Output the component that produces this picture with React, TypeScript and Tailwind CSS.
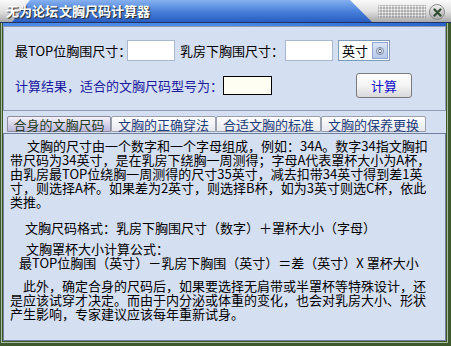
const font = "font-['SimSun','Noto_Sans_CJK_SC',sans-serif]";

const tabs = ["合身的文胸尺码", "文胸的正确穿法", "合适文胸的标准", "文胸的保养更换"];

function TitleBar() {
  return (
    <div className="relative h-[22px] bg-gradient-to-b from-[#fafafa] via-[#e2e2e2] to-[#a9a9a9]">
      <div className="absolute inset-0 bg-gradient-to-b from-[#86b0ee] via-[#4a82dc] to-[#2a5cc0] [clip-path:polygon(30px_0,350px_0,372px_22px,12px_22px)]" />
      <div className="absolute left-[6px] top-[2px] flex whitespace-nowrap text-[13px] leading-[18px] font-bold text-white [text-shadow:1px_1px_1px_#2a2a2a]">
        <span>无为论坛</span>
        <span className="ml-[1px]">文胸尺码计算器</span>
      </div>
      <div className="absolute left-[378px] top-[5px] w-[48px] h-[13px] bg-[radial-gradient(circle,#ffffff_0.9px,#9a9a9a_1.1px)] bg-[length:3px_3px] opacity-70" />
      <div className="absolute left-[429px] top-[4px] w-[16px] h-[16px] rounded-full bg-gradient-to-b from-[#f2f2f2] to-[#a8a8a8] border border-[#8c8c8c] flex items-center justify-center">
        <svg width="9" height="9" viewBox="0 0 9 9">
          <path d="M1.5 1.5 L7.5 7.5 M7.5 1.5 L1.5 7.5" stroke="#2e4a2e" strokeWidth="2.2" strokeLinecap="round" />
        </svg>
      </div>
    </div>
  );
}

function TopPanel() {
  return (
    <div className="h-[85px] border border-[#8e9cb6] bg-[#d5dff2] pl-[11px] pt-[13px] text-[13px] leading-[16px] whitespace-nowrap">
      <div className="flex items-center h-[21px]">
        <span className="w-[112px] shrink-0 text-black">最TOP位胸围尺寸：</span>
        <div className="w-[48px] h-[21px] shrink-0 bg-white border border-[#a9b8cf]" />
        <span className="ml-[5px] w-[105px] shrink-0 text-black">乳房下胸围尺寸：</span>
        <div className="w-[48px] h-[21px] shrink-0 bg-white border border-[#a9b8cf]" />
        <div className="ml-[5px] w-[52px] h-[21px] shrink-0 bg-white border border-[#7f9db9] flex items-center justify-between pl-[3px] pr-[1px]">
          <span className="text-black">英寸</span>
          <div className="w-[16px] h-[17px] bg-gradient-to-b from-[#dbe5f7] to-[#b7c8e8] border border-[#8fa7d2] flex items-center justify-center">
            <svg width="8" height="8" viewBox="0 0 8 8">
              <circle cx="4" cy="4" r="3.5" fill="#e8eef9" stroke="#5a6c8c" strokeWidth="0.8" />
              <path d="M2.3 3.4 L4 1.8 L5.7 3.4 M2.3 4.6 L4 6.2 L5.7 4.6" stroke="#2b3550" strokeWidth="1" fill="none" />
            </svg>
          </div>
        </div>
      </div>
      <div className="flex items-center mt-[12px] h-[25px]">
        <span className="w-[208px] shrink-0 text-[#1a1a9e]">计算结果，适合的文胸尺码型号为：</span>
        <div className="w-[49px] h-[19px] shrink-0 bg-[#fefef2] border border-black" />
        <button className="ml-[84px] w-[56px] h-[25px] shrink-0 rounded-[3px] border border-[#7a7a7a] bg-gradient-to-b from-[#ffffff] via-[#f4f4f4] to-[#d8d8dc] text-[#1010c8] text-[13px]">
          计算
        </button>
      </div>
    </div>
  );
}

function TabBar() {
  return (
    <div className="flex pl-[4px] mt-[5px] h-[16px] text-[13px] leading-[15px] whitespace-nowrap">
      {tabs.map((t, i) => (
        <div
          key={t}
          className={
            i === 0
              ? "w-[104px] h-[16px] border border-[#8c8c9c] rounded-t-[2px] bg-gradient-to-b from-[#f4f2fa] to-[#bdb8dc] text-[#243c24] text-center"
              : "w-[105px] h-[16px] border border-[#9aa0ac] rounded-t-[2px] bg-gradient-to-b from-[#ffffff] to-[#e6e8ee] text-[#1e3c7a] text-center"
          }
        >
          {t}
        </div>
      ))}
    </div>
  );
}

function Content() {
  return (
    <div className="mt-[1px] flex-1 border border-[#6f7f9c] bg-[#d5dff2] pt-[5px] pl-[6px] text-[13px] leading-[14px] text-black whitespace-nowrap">
      <div>
        <div className="pl-[17px]">文胸的尺寸由一个数字和一个字母组成，例如：34A。数字34指文胸扣</div>
        <div>带尺码为34英寸，是在乳房下绕胸一周测得；字母A代表罩杯大小为A杯，</div>
        <div>由乳房最TOP位绕胸一周测得的尺寸35英寸，减去扣带34英寸得到差1英</div>
        <div>寸，则选择A杯。如果差为2英寸，则选择B杯，如为3英寸则选C杯，依此</div>
        <div>类推。</div>
      </div>
      <div className="mt-[12px] pl-[15px]">文胸尺码格式：乳房下胸围尺寸（数字）＋罩杯大小（字母）</div>
      <div className="mt-[7px] pl-[16px]">文胸罩杯大小计算公式：</div>
      <div className="pl-[9px]">最TOP位胸围（英寸）－乳房下胸围（英寸）＝差（英寸）X 罩杯大小</div>
      <div className="mt-[9px]">
        <div className="pl-[13px]">此外，确定合身的尺码后，如果要选择无肩带或半罩杯等特殊设计，还</div>
        <div>是应该试穿才决定。而由于内分泌或体重的变化，也会对乳房大小、形状</div>
        <div>产生影响，专家建议应该每年重新试身。</div>
      </div>
    </div>
  );
}

export default function App() {
  return (
    <div className={`w-[451px] h-[346px] flex flex-col bg-[#3e5a2c] ${font}`}>
      <TitleBar />
      <div className="h-px bg-[#1e3466]" />
      <div className="flex-1 flex flex-col pl-[1px] pr-[3px] pb-[3px]">
        <div className="flex-1 flex flex-col border-l border-r border-b border-[#a9bca0] pl-[1px] pr-px pb-[1px]">
          <div className="h-[3px] bg-gradient-to-r from-[#4a8ae4] via-[#4a8ae4] to-[#2a64c8]" />
          <div className="flex-1 flex flex-col bg-[#d5dff2]">
            <TopPanel />
            <TabBar />
            <Content />
          </div>
        </div>
      </div>
    </div>
  );
}
